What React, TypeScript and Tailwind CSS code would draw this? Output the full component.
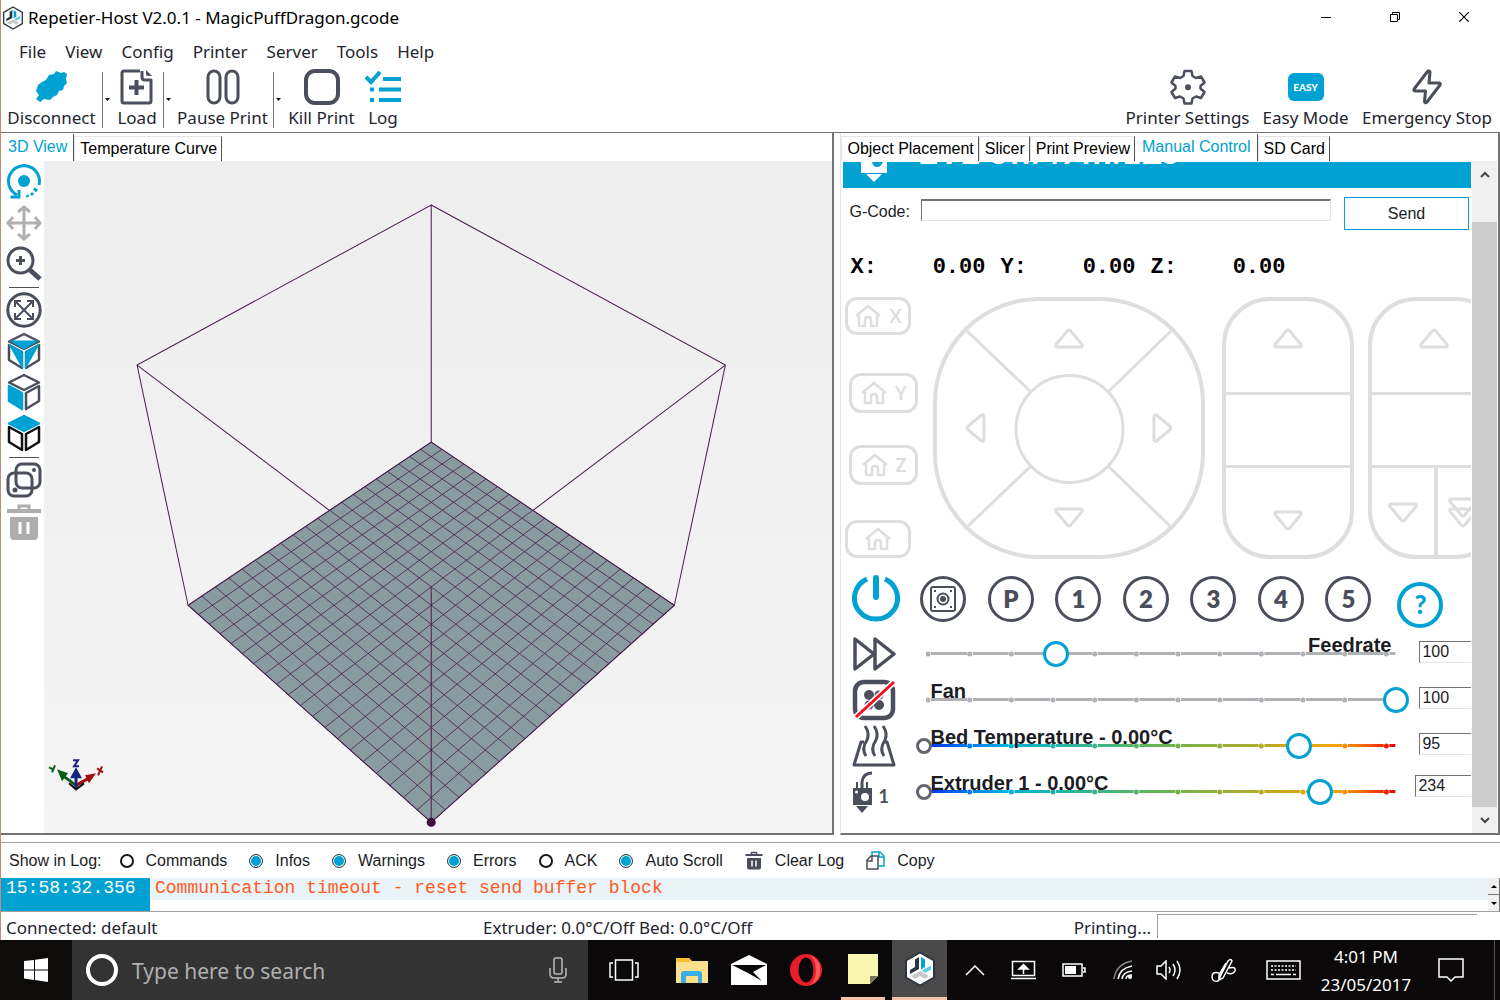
import { useState } from 'react';
import type { ReactNode } from 'react';

const DARK = '#4b4f5c';
const BLUE = '#00a2d3';
const PALE = '#dedede';

const Logo: React.FC<{ className: string }> = ({ className }) => (
  <svg viewBox="0 0 32 36" className={className}>
    <path d="M16 1.500 L30 9.500 V26.500 L16 34.500 L2 26.500 V9.500 Z" fill="#fff" stroke="#2c3440" strokeWidth="2" strokeLinejoin="round" />
    <path d="M15 6 V18 L6 23 V19 L11 16 V8.500 Z" fill="#2c3440" />
    <path d="M17 6 L21 8.500 V16 L17 18.500 Z" fill={BLUE} />
    <path d="M18 19.500 L27 14.500 V18.500 L21 22 Z" fill="#5fcbe6" />
    <path d="M16 20 L25 25 L21 28 L16 25 L11 28 L7 25 Z" fill="#c9c9c9" />
  </svg>
);

const Arrow: React.FC<{ className?: string }> = ({ className = '' }) => (
  <svg viewBox="0 0 32 22" className={`h-[22px] w-8 ${className}`}>
    <path d="M14.500 2.800 Q16 1.200 17.500 2.800 L29 16.500 Q30 19 27.500 19 H4.500 Q2 19 3 16.500 Z" fill="none" stroke={PALE} strokeWidth="3" strokeLinejoin="round" />
  </svg>
);

interface ToolButtonProps {
  label: string;
  width: string;
  children: ReactNode;
}

const ToolButton: React.FC<ToolButtonProps> = ({ label, width, children }) => (
  <button type="button" className={`flex shrink-0 flex-col items-center pb-[5px] ${width}`}>
    <span className="flex h-[42px] items-center justify-center">{children}</span>
    <span className="text-[17px] leading-5 whitespace-nowrap">{label}</span>
  </button>
);

const Dropdown: React.FC<{ label: string }> = ({ label }) => (
  <button type="button" aria-label={label} className="flex h-[56px] w-[9px] shrink-0 items-center justify-center border-l border-neutral-500">
    <svg viewBox="0 0 5 3" className="h-[3px] w-[5px]"><path d="M0 0 H5 L2.500 3 Z" fill="#111" /></svg>
  </button>
);

const DisconnectIcon = () => (
  <svg viewBox="0 0 32 32" className="size-8">
    <path d="M28 1 L31 3 L30 8 L31 12 L28 15 L27 19 L23 20 L21 24 L17 26 L14 29 L8 28 L4 31 L0 28 L3 24 L0 20 L2 14 L6 11 L10 9 L13 4 L18 3 L20 0 L25 2 Z" fill={BLUE} />
  </svg>
);

const LoadIcon = () => (
  <svg viewBox="0 0 34 36" className="h-9 w-[34px]" fill="none" stroke={DARK} strokeWidth="3">
    <path d="M20 2 H4 Q2 2 2 4 V32 Q2 34 4 34 H29 Q31 34 31 32 V11 H25 Q22 11 22 8 V2" strokeLinejoin="round" />
    <path d="M26 1 V5 Q26 7 28 7 H32 Z" fill={DARK} stroke="none" />
    <path d="M16.500 11 V26 M9 18.500 H24" strokeWidth="4" />
  </svg>
);

const PauseIcon = () => (
  <svg viewBox="0 0 34 36" className="h-9 w-[34px]" fill="none" stroke={DARK} strokeWidth="3">
    <rect x="2" y="2" width="12" height="32" rx="6" />
    <rect x="20" y="2" width="12" height="32" rx="6" />
  </svg>
);

const KillIcon = () => (
  <svg viewBox="0 0 36 36" className="size-9">
    <rect x="2" y="2" width="32" height="32" rx="9" fill="none" stroke={DARK} strokeWidth="4" />
  </svg>
);

const LogIcon = () => (
  <svg viewBox="0 0 36 32" className="h-8 w-9" fill="none" stroke={BLUE} strokeWidth="4">
    <path d="M1 6 L6 11 L15 1" />
    <path d="M18 8 H36 M14 18.500 H36 M14 29 H36 M5 18.500 H9 M5 29 H9" />
  </svg>
);

const GearIcon = () => (
  <svg viewBox="0 0 36 36" className="size-9">
    <path d="M14.500 2 H21.500 L22.500 7 L26 9 L31 7.500 L34.500 13.500 L30.500 17 V19.500 L34.500 23 L31 29 L26 27.500 L22.500 29.500 L21.500 34.500 H14.500 L13.500 29.500 L10 27.500 L5 29 L1.500 23 L5.500 19.500 V17 L1.500 13.500 L5 7.500 L10 9 L13.500 7 Z" fill="none" stroke={DARK} strokeWidth="2.500" strokeLinejoin="round" />
    <circle cx="18" cy="18.200" r="3" fill={DARK} />
  </svg>
);

const BoltIcon = () => (
  <svg viewBox="0 0 30 36" className="h-9 w-[30px]">
    <path d="M15.500 2.500 Q17 1 18 3 L17 14 H27 Q29 14.500 28 16 L15 33 Q13 35 12.500 32.500 L13.500 22 H3 Q1 21.500 2.500 19.500 Z" fill="none" stroke={DARK} strokeWidth="3" strokeLinejoin="round" />
  </svg>
);

/* ---------- View toolbar icons ---------- */

const Cube: React.FC<{ face: 'iso' | 'front' | 'top' }> = ({ face }) => {
  const line = face === 'top' ? '#111' : DARK;
  return (
    <svg viewBox="0 0 36 38" className="h-[38px] w-9" fill="none" stroke={line} strokeWidth="2.500" strokeLinejoin="round">
      <path d="M18 2 L33 9.500 L18 17 L3 9.500 Z" fill={face === 'top' ? BLUE : 'none'} stroke={face === 'top' ? BLUE : line} />
      <path d="M3 13 L16 20 V36 L3 28 Z" fill={face === 'front' ? BLUE : 'none'} stroke={face === 'front' ? BLUE : line} />
      <path d="M33 13 L20 20 V36 L33 28 Z" />
      {face === 'iso' && (
        <>
          <path d="M3 8.500 H33 L18 17.500 Z" fill={BLUE} stroke="none" />
          <path d="M2 11.500 L17 19.500 V38 Z" fill={BLUE} stroke="none" />
          <path d="M34 11.500 L19 19.500 V38 Z" fill={BLUE} stroke="none" />
        </>
      )}
    </svg>
  );
};

const RotateIcon = () => (
  <svg viewBox="0 0 36 36" className="size-9" fill="none" stroke={BLUE}>
    <path d="M11 31 A15.500 15.500 0 1 1 33 21" strokeWidth="3" />
    <path d="M4.500 33 H13 V26" strokeWidth="3" />
    <circle cx="18" cy="17" r="6" fill={BLUE} stroke="none" />
    <path d="M28 24.500 L31 27 M25 29 L27 31 M21 31 L22 33" strokeWidth="3" />
  </svg>
);

const MoveIcon = () => (
  <svg viewBox="0 0 36 36" className="size-9" fill="none" stroke="#b0b0b0" strokeWidth="3">
    <path d="M18 2 V34 M2 18 H34 M12 7 L18 2 L24 7 M12 29 L18 34 L24 29 M7 12 L2 18 L7 24 M29 12 L34 18 L29 24" />
  </svg>
);

const ZoomIcon = () => (
  <svg viewBox="0 0 36 36" className="size-9" fill="none" stroke={DARK} strokeWidth="3">
    <circle cx="14.500" cy="14.500" r="12.500" />
    <path d="M14.500 10 V19 M10 14.500 H19" />
    <path d="M24 24 L34 33" strokeWidth="5" />
  </svg>
);

const FitIcon = () => (
  <svg viewBox="0 0 36 36" className="size-9" fill="none" stroke={DARK} strokeWidth="2">
    <circle cx="18" cy="18" r="16.200" strokeWidth="3" />
    <path d="M9 9 L27 27 M27 9 L9 27" />
    <path d="M9 15 V9 H15 M21 9 H27 V15 M27 21 V27 H21 M15 27 H9 V21" />
  </svg>
);

const CloneIcon = () => (
  <svg viewBox="0 0 36 36" className="size-9" fill="none" stroke={DARK} strokeWidth="3">
    <rect x="10" y="2" width="24" height="24" rx="6" />
    <rect x="2" y="11" width="24" height="23" rx="6" />
    <circle cx="28" cy="8" r="2" fill={DARK} stroke="none" />
    <circle cx="9" cy="28" r="2.500" fill={DARK} stroke="none" />
  </svg>
);

const TrashIcon: React.FC<{ color: string; className: string }> = ({ color, className }) => (
  <svg viewBox="0 0 36 38" className={className}>
    <path d="M13 7 V3 H23 V7" fill="none" stroke={color} strokeWidth="3" />
    <path d="M1 6 H35 V10 H1 Z M4 14 H32 V33 Q32 37 28 37 H8 Q4 37 4 33 Z" fill={color} />
    <path d="M14 19 V31 M22 19 V31" stroke="#fff" strokeWidth="3" />
  </svg>
);

const Divider = () => <hr className="w-[30px] border-t border-neutral-600" />;

const ViewTools = () => (
  <div className="flex w-[43px] shrink-0 flex-col items-center gap-[5px] bg-white pt-[3px] pl-0.5">
    <button type="button" aria-label="Rotate"><RotateIcon /></button>
    <button type="button" aria-label="Move"><MoveIcon /></button>
    <button type="button" aria-label="Zoom"><ZoomIcon /></button>
    <Divider />
    <button type="button" aria-label="Fit objects" className="-mt-px"><FitIcon /></button>
    <button type="button" aria-label="Isometric view" className="-mt-px"><Cube face="iso" /></button>
    <button type="button" aria-label="Front view" className="-mt-0.5"><Cube face="front" /></button>
    <button type="button" aria-label="Top view" className="-mt-0.5"><Cube face="top" /></button>
    <Divider />
    <button type="button" aria-label="Toggle edges" className="-mt-px"><CloneIcon /></button>
    <button type="button" aria-label="Delete"><TrashIcon color="#adadad" className="h-[38px] w-9" /></button>
  </div>
);

/* ---------- 3D scene ---------- */

// print bed corners: back, right, front, left
const bed = [[431, 442], [674, 605], [431, 822], [188, 605]];

// maps unit bed coordinates to the projected bed
const project = (u: number, v: number): [number, number] => {
  const [[x0, y0], [x1, y1], [x2, y2], [x3, y3]] = bed;
  const dx1 = x1 - x2, dx2 = x3 - x2, sx = x0 - x1 + x2 - x3;
  const dy1 = y1 - y2, dy2 = y3 - y2, sy = y0 - y1 + y2 - y3;
  const det = dx1 * dy2 - dx2 * dy1;
  const g = (sx * dy2 - dx2 * sy) / det;
  const h = (dx1 * sy - dy1 * sx) / det;
  const w = g * u + h * v + 1;
  return [
    ((x1 - x0 + g * x1) * u + (x3 - x0 + h * x3) * v + x0) / w,
    ((y1 - y0 + g * y1) * u + (y3 - y0 + h * y3) * v + y0) / w,
  ];
};

const CELLS = 20;
const gridPath = Array.from({ length: CELLS + 1 }, (_, i) => {
  const t = i / CELLS;
  return `M${project(t, 0)} L${project(t, 1)} M${project(0, t)} L${project(1, t)}`;
}).join(' ');

const Scene = () => (
  <div className="min-w-0 flex-1 bg-gradient-to-b from-[#eeeeee] to-[#f4f4f4]">
    <svg viewBox="44 161 788 672" className="block h-full w-full" role="img" aria-label="Print bed">
      <g fill="none" stroke="#4a1a4f" strokeWidth="1">
        <path d="M431 442 V205 L137 365 L188 605 M431 205 L725 365 L674 605 M137 365 L431 587 L725 365" />
        <path d="M431 442 L674 605 L431 822 L188 605 Z" fill="#889b9f" />
        <path d={gridPath} strokeWidth="0.800" />
        <path d="M431 587 V822" />
      </g>
      <circle cx="431" cy="822" r="4.500" fill="#3c0f40" />
      <g strokeWidth="3" fill="none">
        <path d="M76 785 L61 774" stroke="#075c18" />
        <path d="M76 785 L92 776" stroke="#a01010" />
        <path d="M76 788 V771" stroke="#15257d" />
      </g>
      <path d="M57 769 L68 773 L62 781 Z" fill="#075c18" />
      <path d="M96 773 L85 775 L89 783 Z" fill="#a01010" />
      <path d="M76 767 L70 778 H82 Z" fill="#15257d" />
      <path d="M69 783 L76 789 L84 783" stroke="#111" strokeWidth="2" fill="none" />
      <path d="M49 767 L53 769 M55 765 L52 772" stroke="#075c18" strokeWidth="2" />
      <path d="M97 768 L103 772 M102 766 L98 775" stroke="#a01010" strokeWidth="2" />
      <path d="M73 760 H78 L74 766 H79" stroke="#15257d" strokeWidth="2" fill="none" />
    </svg>
  </div>
);

/* ---------- Tabs ---------- */

interface TabsProps {
  tabs: string[];
  active: string;
}

const Tabs: React.FC<TabsProps> = ({ tabs, active }) => (
  <div role="tablist" className="flex h-[27px] shrink-0 items-stretch bg-white font-['Liberation_Sans',Arial,sans-serif] text-base">
    {tabs.map(tab => (
      <button
        key={tab}
        type="button"
        role="tab"
        aria-selected={tab === active}
        className={
          tab === active
            ? 'border-r border-neutral-600 pr-[6px] pb-[1px] pl-[7px] text-[#00a2d3]'
            : 'mt-[2px] border-t border-r border-l border-t-neutral-200 border-r-neutral-600 border-l-neutral-200 pr-1 pb-[1px] pl-[5px] text-black'
        }
      >
        {tab}
      </button>
    ))}
  </div>
);

/* ---------- Manual control ---------- */

const HomeIcon = () => (
  <svg viewBox="0 0 26 24" className="h-6 w-[26px]" fill="none" stroke={PALE} strokeWidth="2.500" strokeLinejoin="round">
    <path d="M1 12 L13 2 L25 12 M4 11 V22 H10 V16 Q10 13 13 13 Q16 13 16 16 V22 H22 V11" />
  </svg>
);

const homeButtons = [
  { axis: 'X', box: 'h-[38px] w-[66px]' },
  { axis: 'Y', box: 'mt-[38px] ml-1 h-10 w-[69px]' },
  { axis: 'Z', box: 'mt-8 ml-1 h-10 w-[69px]' },
  { axis: '', box: 'mt-[35px] h-[38px] w-[66px]' },
];

const JogPad = () => (
  <div className="relative h-[262px] w-[272px] shrink-0 overflow-hidden rounded-[106px] border-4 border-[#dedede]">
    <svg viewBox="4 4 264 254" className="absolute inset-0 size-full" fill="none" stroke={PALE} strokeWidth="3">
      <circle cx="136.500" cy="132" r="53.500" />
      <path d="M34 34 L98 95 M238 34 L175 95 M34 230 L98 169 M238 230 L175 169" />
    </svg>
    <div className="relative grid h-full grid-cols-[78px_108px_78px] grid-rows-[76px_102px_76px] place-items-center">
      <button type="button" aria-label="Y plus" className="col-start-2"><Arrow /></button>
      <button type="button" aria-label="X minus" className="col-start-1 row-start-2"><Arrow className="-rotate-90" /></button>
      <button type="button" aria-label="X plus" className="col-start-3 row-start-2"><Arrow className="rotate-90" /></button>
      <button type="button" aria-label="Y minus" className="col-start-2 row-start-3"><Arrow className="rotate-180" /></button>
    </div>
  </div>
);

const ZPad = () => (
  <div className="flex h-[262px] w-[132px] shrink-0 flex-col rounded-[48px] border-4 border-[#dedede]">
    <button type="button" aria-label="Z plus" className="flex h-[91px] items-center justify-center pb-4"><Arrow /></button>
    <div className="h-[76px] border-y-[3px] border-[#dedede]" />
    <button type="button" aria-label="Z minus" className="flex flex-1 items-center justify-center pt-4"><Arrow className="rotate-180" /></button>
  </div>
);

const ExtruderPad = () => (
  <div className="flex h-[262px] w-[136px] shrink-0 flex-col rounded-[48px] border-4 border-[#dedede]">
    <button type="button" aria-label="Retract" className="flex h-[91px] items-center justify-center pr-1 pb-4"><Arrow /></button>
    <div className="h-[76px] border-y-[3px] border-[#dedede]" />
    <div className="flex flex-1">
      <button type="button" aria-label="Extrude" className="flex w-[66px] items-center justify-center border-r-4 border-[#dedede]"><Arrow className="rotate-180" /></button>
      <button type="button" aria-label="Extrude fast" className="flex flex-1 flex-col items-center justify-center pr-3">
        <Arrow className="rotate-180" />
        <Arrow className="-mt-3 rotate-180" />
      </button>
    </div>
  </div>
);

const PowerIcon = () => (
  <svg viewBox="0 0 48 48" className="size-12" fill="none" stroke={BLUE}>
    <path d="M15 4 A21.500 21 0 1 0 33 4" strokeWidth="5" />
    <path d="M24 3 V22" strokeWidth="6" strokeLinecap="round" />
  </svg>
);

const MotorIcon = () => (
  <svg viewBox="0 0 28 28" className="size-7" fill="none" stroke={DARK} strokeWidth="2">
    <rect x="2" y="2" width="24" height="24" rx="2" />
    <circle cx="14" cy="14" r="5.500" />
    <circle cx="14" cy="14" r="2" fill={DARK} />
    <path d="M5 6 H7 M21 6 H23 M5 22 H7 M21 22 H23" />
  </svg>
);

const roundButton = "flex size-[46px] shrink-0 items-center justify-center rounded-full border-[3px] border-[#4b4f5c] font-['Lato',sans-serif] text-2xl font-extrabold text-[#4b4f5c]";

const FeedIcon = () => (
  <svg viewBox="0 0 44 34" className="h-[34px] w-11" fill="none" stroke={DARK} strokeWidth="3.500" strokeLinejoin="round">
    <path d="M3 2 V32 L22 17 Z M23 2 V32 L42 17 Z" />
  </svg>
);

const FanIcon = () => (
  <svg viewBox="0 0 44 42" className="h-[42px] w-11">
    <rect x="3" y="3" width="38" height="36" rx="9" fill="none" stroke={DARK} strokeWidth="4.500" />
    <g fill={DARK}>
      <circle cx="17" cy="16" r="5" />
      <circle cx="27" cy="16" r="4.500" />
      <circle cx="17" cy="26" r="4.500" />
      <circle cx="27" cy="26" r="5" />
    </g>
    <path d="M4 38 L42 3" stroke="#fff" strokeWidth="6" />
    <path d="M4 38 L42 3" stroke="#f01020" strokeWidth="3" />
  </svg>
);

const BedIcon = () => (
  <svg viewBox="0 0 44 42" className="h-[42px] w-11" fill="none" stroke={DARK}>
    <path d="M12 17 H9 L2 40 H42 L35 17 H33" strokeWidth="3" strokeLinejoin="round" />
    <path d="M13 1 Q18 8 15 15 Q9 24 14 31 M22 1 Q27 8 24 15 Q18 24 23 31 M31 1 Q36 8 33 15 Q27 24 32 31" strokeWidth="3" />
  </svg>
);

const ExtruderIcon = () => (
  <svg viewBox="0 0 22 42" className="h-[42px] w-[22px]">
    <path d="M10 17 V11 Q11 2 20 2" fill="none" stroke={DARK} strokeWidth="3" />
    <path d="M5 11 V17 M15 11 V17" stroke={DARK} strokeWidth="2" />
    <path d="M1 17 H20 V34 H1 Z M4 35 H16 L10 42 Z" fill={DARK} />
    <circle cx="13" cy="26" r="4" fill="#fff" />
    <circle cx="4.500" cy="21" r="1.500" fill="#fff" />
  </svg>
);

const TICK = 125 / 3;

const Track: React.FC<{ heat: boolean }> = ({ heat }) => {
  const paint = heat ? 'url(#heat)' : '#b0b1b5';
  return (
    <svg viewBox="0 0 470 6" className="absolute top-5 left-[11px] h-[6px] w-[470px]">
      <defs>
        <linearGradient id="heat" gradientUnits="userSpaceOnUse" x1="0" y1="0" x2="470" y2="0">
          <stop offset="0" stopColor="#0030e0" />
          <stop offset="0.090" stopColor="#0078f0" />
          <stop offset="0.170" stopColor="#00b4dc" />
          <stop offset="0.350" stopColor="#35b58c" />
          <stop offset="0.480" stopColor="#62b558" />
          <stop offset="0.700" stopColor="#b0ac2c" />
          <stop offset="0.870" stopColor="#f5a600" />
          <stop offset="0.930" stopColor="#f56a10" />
          <stop offset="1" stopColor="#f00000" />
        </linearGradient>
      </defs>
      {Array.from({ length: 12 }, (_, i) => (
        <g key={i} fill={paint}>
          <circle cx={2 + i * TICK} cy="3" r="2.500" />
          <rect x={5 + i * TICK} y="1" width={i === 11 ? 6 : 36} height="3" />
        </g>
      ))}
    </svg>
  );
};

interface Control {
  id: string;
  label: string;
  value: number;
  min: number;
  max: number;
  heat: boolean;
  icon: ReactNode;
}

const controls: Control[] = [
  { id: 'feedrate', label: 'Feedrate', value: 100, min: 25, max: 300, heat: false, icon: <FeedIcon /> },
  { id: 'fan', label: 'Fan', value: 100, min: 0, max: 100, heat: false, icon: <FanIcon /> },
  { id: 'bed', label: 'Bed Temperature - 0.00°C', value: 95, min: 0, max: 120, heat: true, icon: <BedIcon /> },
  {
    id: 'extruder',
    label: 'Extruder 1 - 0.00°C',
    value: 234,
    min: 0,
    max: 280,
    heat: true,
    icon: (
      <span className="flex items-center gap-1 font-['Lato',sans-serif] text-lg font-bold text-[#4b4f5c]">
        <ExtruderIcon />
        <span className="pt-2">1</span>
      </span>
    ),
  },
];

const ControlRow: React.FC<{ control: Control }> = ({ control }) => {
  const [value, setValue] = useState(control.value);
  return (
    <div className="flex h-[46px] items-center">
      <div className="flex w-[72px] shrink-0 items-center pl-[9px]">{control.icon}</div>
      <div className="relative h-[46px] w-[494px] shrink-0">
        <Track heat={control.heat} />
        {control.heat && <span className="absolute top-[15px] left-[1px] size-4 rounded-full border-[3px] border-[#63666f] bg-white" />}
        <input
          id={control.id}
          type="range"
          min={control.min}
          max={control.max}
          value={value}
          onChange={e => setValue(Number(e.target.value))}
          className="absolute inset-0 h-full w-full appearance-none bg-transparent [&::-webkit-slider-thumb]:size-[26px] [&::-webkit-slider-thumb]:appearance-none [&::-webkit-slider-thumb]:rounded-full [&::-webkit-slider-thumb]:border-[3px] [&::-webkit-slider-thumb]:border-[#00a2d3] [&::-webkit-slider-thumb]:bg-white"
        />
        <label
          htmlFor={control.id}
          className={`absolute top-[2px] text-xl leading-6 font-bold whitespace-nowrap text-[#1b1c24] ${control.id === 'feedrate' ? 'right-[18px]' : 'left-[15px]'}`}
        >
          {control.label}
        </label>
      </div>
      <input
        type="text"
        aria-label={`${control.label} value`}
        value={value}
        onChange={e => setValue(Number(e.target.value) || 0)}
        className={`h-[22px] w-20 shrink-0 border border-neutral-200 border-t-neutral-500 border-l-neutral-500 px-[2px] text-base ${control.id === 'extruder' ? 'mb-3 ml-[6px]' : 'mb-[5px] ml-[10px]'}`}
      />
    </div>
  );
};

const ManualControl = () => (
  <div className="min-w-0 flex-1 overflow-hidden pt-px pl-[2px] font-['Liberation_Sans',Arial,sans-serif] text-base text-[#1b1c24]">
    <div className="relative flex h-[26px] items-start overflow-hidden bg-[#00a2d3] text-white">
      <svg viewBox="0 0 26 21" className="ml-[18px] h-[21px] w-[26px]">
        <path d="M0 0 H26 V11 H0 Z M5 12 H21 L13 20 Z" fill="#fff" />
        <path d="M11 0 H22 Q20 5 16 5 Q12 5 11 0 Z" fill={BLUE} />
      </svg>
      <span className="absolute -top-[30px] left-[74px] font-['Lato',sans-serif] text-[36px] leading-9 font-bold whitespace-nowrap">ETE 5h:47m:12s</span>
    </div>
    <form className="mt-[9px] flex h-[33px] items-start pr-0.5" onSubmit={e => e.preventDefault()}>
      <label htmlFor="gcode" className="w-[78px] shrink-0 pt-[3px] pl-[6px]">G-Code:</label>
      <input id="gcode" type="text" className="mt-0.5 h-[22px] min-w-0 flex-1 border border-t-2 border-neutral-200 border-t-neutral-500 border-l-neutral-500" />
      <button type="submit" className="ml-[13px] h-[33px] w-[125px] shrink-0 border border-[#00a2d3]">Send</button>
    </form>
    <div className="flex h-[67px] items-center pt-2 pl-[7px] font-['Liberation_Mono',monospace] text-[22px] font-bold text-black">
      {['X', 'Y', 'Z'].map(axis => (
        <div key={axis} className="flex w-[150px] justify-between pr-[15px]">
          <span>{axis}:</span>
          <span>0.00</span>
        </div>
      ))}
    </div>
    <div className="flex pl-0.5">
      <div className="w-[88px] shrink-0">
        {homeButtons.map(({ axis, box }) => (
          <button
            key={axis}
            type="button"
            aria-label={`Home ${axis || 'all'}`}
            className={`flex items-center justify-center gap-2 rounded-xl border-[3px] border-[#dedede] font-['Lato',sans-serif] text-lg font-bold text-[#dedede] ${box}`}
          >
            <HomeIcon />
            {axis}
          </button>
        ))}
      </div>
      <JogPad />
      <div className="ml-[17px] flex gap-[14px]">
        <ZPad />
        <ExtruderPad />
      </div>
    </div>
    <div className="mt-4 flex h-12 items-center pl-[9px]">
      <button type="button" aria-label="Power" className="mr-5"><PowerIcon /></button>
      <div className="flex w-[451px] shrink-0 justify-between">
        <button type="button" aria-label="Stop motor" className={roundButton}><MotorIcon /></button>
        {['P', '1', '2', '3', '4', '5'].map(name => (
          <button key={name} type="button" className={roundButton}>{name}</button>
        ))}
      </div>
      <button type="button" className="mt-[11px] ml-[26px] flex size-[46px] shrink-0 items-center justify-center rounded-full border-4 border-[#00a2d3] font-['Lato',sans-serif] text-[26px] font-black text-[#00a2d3]">?</button>
    </div>
    <div className="mt-2">
      {controls.map(control => <ControlRow key={control.id} control={control} />)}
    </div>
  </div>
);

const Chevron: React.FC<{ className?: string }> = ({ className = '' }) => (
  <svg viewBox="0 0 10 8" className={`h-2 w-[10px] ${className}`}>
    <path d="M1 6 L5 2 L9 6" fill="none" stroke="#444" strokeWidth="2" />
  </svg>
);

const ScrollBar = () => (
  <div className="mr-px ml-px flex w-[25px] shrink-0 flex-col bg-[#f0f0f0]">
    <button type="button" aria-label="Scroll up" className="flex h-7 items-center justify-center"><Chevron /></button>
    <div className="mt-[33px] flex-1 bg-[#cdcdcd]" />
    <button type="button" aria-label="Scroll down" className="flex h-[26px] items-center justify-center"><Chevron className="rotate-180" /></button>
  </div>
);

/* ---------- Log ---------- */

const filters = [
  { name: 'Commands', on: false },
  { name: 'Infos', on: true },
  { name: 'Warnings', on: true },
  { name: 'Errors', on: true },
  { name: 'ACK', on: false },
  { name: 'Auto Scroll', on: true },
];

const LogBar = () => (
  <div className="flex h-9 shrink-0 items-center border-t border-neutral-400 pl-2 font-['Liberation_Sans',Arial,sans-serif] text-base text-[#1b1c24]">
    <span className="mr-[18px]">Show in Log:</span>
    {filters.map(({ name, on }) => (
      <label key={name} className="mr-[22px] flex items-center gap-3">
        <input
          type="checkbox"
          defaultChecked={on}
          className="size-[14px] appearance-none rounded-full border-2 border-neutral-900 checked:border checked:border-neutral-700 checked:bg-[#00a2d3] checked:shadow-[inset_0_0_0_1px_white]"
        />
        {name}
      </label>
    ))}
    <button type="button" className="mr-[22px] flex items-center gap-3">
      <TrashIcon color={DARK} className="h-[19px] w-[18px]" />
      Clear Log
    </button>
    <button type="button" className="flex items-center gap-3">
      <svg viewBox="0 0 19 19" className="size-[19px]" fill="none" strokeWidth="1.500">
        <path d="M6 5 V1 H14 L18 5 V15 H13 M13 1 V6 H18" stroke={BLUE} />
        <path d="M1 9 L5 5 H12 V18 H1 Z M1 10 H6 V5" stroke={DARK} fill="#fff" />
      </svg>
      Copy
    </button>
  </div>
);

const LogView = () => (
  <div className="flex h-[34px] shrink-0 border-b border-neutral-400 font-['Liberation_Mono',monospace] text-lg leading-5">
    <div className="w-[149px] shrink-0 bg-[#00a2d3] pl-[5px] text-white">15:58:32.356</div>
    <div className="min-w-0 flex-1">
      <div className="ml-px h-[22px] bg-[#eaf4f8] pl-1 whitespace-nowrap text-[#ff5a1e]">Communication timeout - reset send buffer block</div>
    </div>
    <div className="flex w-3 shrink-0 flex-col divide-y divide-neutral-500 border-r border-neutral-500 bg-[#f0f0f0]">
      <button type="button" aria-label="Log up" className="flex flex-1 items-center justify-center"><svg viewBox="0 0 6 3" className="h-[3px] w-[6px]"><path d="M0 3 H6 L3 0 Z" /></svg></button>
      <button type="button" aria-label="Log down" className="flex flex-1 items-center justify-center"><svg viewBox="0 0 6 3" className="h-[3px] w-[6px]"><path d="M0 0 H6 L3 3 Z" /></svg></button>
    </div>
  </div>
);

/* ---------- Windows taskbar ---------- */

const TrayIcons = () => (
  <>
    <button type="button" aria-label="Hidden icons" className="ml-[18px]">
      <svg viewBox="0 0 20 12" className="h-3 w-5"><path d="M1 11 L10 2 L19 11" stroke="#fff" strokeWidth="1.500" fill="none" /></svg>
    </button>
    <button type="button" aria-label="Safely remove" className="ml-[26px]">
      <svg viewBox="0 0 25 20" className="h-5 w-[25px]" fill="none" stroke="#fff" strokeWidth="1.500">
        <rect x="1.500" y="1.500" width="22" height="14" />
        <path d="M0 18.500 H25" />
        <path d="M12.500 14 V8 M8 9 L12.500 4.500 L17 9 Z" fill="#fff" />
      </svg>
    </button>
    <button type="button" aria-label="Battery" className="ml-[26px]">
      <svg viewBox="0 0 24 14" className="h-[14px] w-6"><path d="M1 1 H20 V13 H1 Z M21 5 H23 V9 H21" fill="none" stroke="#fff" strokeWidth="1.500" /><path d="M3 3 H14 V11 H3 Z" fill="#fff" /></svg>
    </button>
    <button type="button" aria-label="Network" className="ml-[27px]">
      <svg viewBox="0 0 20 20" className="size-5" fill="none" stroke="#fff" strokeWidth="1.500">
        <path d="M1 19 Q3 4 19 1" stroke="#888" />
        <path d="M5 19 Q7 8 19 6 M9 19 Q10 12 19 11 M13 19 Q13 15 19 15" />
        <circle cx="17" cy="17" r="2" fill="#fff" stroke="none" />
      </svg>
    </button>
    <button type="button" aria-label="Volume" className="ml-[23px]">
      <svg viewBox="0 0 26 20" className="h-5 w-[26px]" fill="none" stroke="#fff" strokeWidth="1.500"><path d="M1 6 H5 L10 1 V19 L5 14 H1 Z M13 7 Q15 10 13 13 M17 4 Q21 10 17 16 M21 1 Q27 10 21 19" /></svg>
    </button>
    <button type="button" aria-label="Pen workspace" className="ml-[29px]">
      <svg viewBox="0 0 25 25" className="size-[25px]" fill="none" stroke="#fff" strokeWidth="1.500"><path d="M8 15 Q1 13 1 19 Q1 24 7 23 L17 3 Q20 0 21 3 L12 20 L8 22 V17 L15 5 M18 10 Q25 8 24 13 Q22 17 16 15" /></svg>
    </button>
    <button type="button" aria-label="Keyboard" className="ml-[30px]">
      <svg viewBox="0 0 35 20" className="h-5 w-[35px]" fill="none" stroke="#fff" strokeWidth="1.500">
        <rect x="1" y="1" width="33" height="18" />
        <path d="M5 6 H30 M5 10 H30" strokeDasharray="2 1.500" />
        <path d="M5 14.500 H8 M10 14.500 H25 M27 14.500 H30" />
      </svg>
    </button>
  </>
);

const Taskbar = () => (
  <footer className="flex h-[60px] shrink-0 items-center overflow-hidden bg-[#0a0808] text-white">
    <button type="button" aria-label="Start" className="flex h-full w-[72px] shrink-0 items-center justify-center bg-[#0d0c0b]">
      <svg viewBox="0 0 24 24" className="size-6"><path d="M0 3 L10 2 V11.500 H0 Z M11 1.800 L24 0 V11.500 H11 Z M0 12.500 H10 V22 L0 20.500 Z M11 12.500 H24 V24 L11 22 Z" fill="#fff" /></svg>
    </button>
    <div className="flex h-full w-[516px] shrink-0 items-center bg-[#333] pr-[21px] pl-[14px]">
      <span className="mr-[14px] size-8 shrink-0 rounded-full border-[4px] border-white" />
      <input type="text" aria-label="Search" placeholder="Type here to search" className="min-w-0 flex-1 bg-transparent pt-[3px] text-[21px] placeholder:text-[#b0b0b0]" />
      <svg viewBox="0 0 18 26" className="h-[26px] w-[18px]" fill="none" stroke="#bbb" strokeWidth="1.500"><rect x="5" y="1" width="8" height="16" rx="2" /><path d="M1 11 V17 Q1 21 5 21 H13 Q17 21 17 17 V11 M9 21 V25 M5 25 H13" /></svg>
    </div>
    <button type="button" aria-label="Task view" className="ml-[21px]">
      <svg viewBox="0 0 30 22" className="h-[22px] w-[30px]" fill="none" stroke="#fff" strokeWidth="1.500"><path d="M6.500 1 H23.500 V21 H6.500 Z M4 4 H1 V18 H4 M26 4 H29 V18 H26" /></svg>
    </button>
    <button type="button" aria-label="File Explorer" className="ml-[37px]">
      <svg viewBox="0 0 32 27" className="h-[27px] w-8"><path d="M0 1 H13 L16 4 H32 V26 H0 Z" fill="#fde08c" /><path d="M0 1 H13 L15 5 H0 Z" fill="#f8c030" /><path d="M5 26 V17 Q5 14 8 14 H23 Q26 14 26 17 V26 H22 V19 H10 V26 Z" fill="#35aeea" /></svg>
    </button>
    <button type="button" aria-label="Mail" className="ml-[23px]">
      <svg viewBox="0 0 36 30" className="h-[30px] w-9"><path d="M0 9 L18 0 L36 9 V30 H0 Z" fill="#fff" /><path d="M1 10 H35 L22 17 L31 26 L17 18 Z" fill="#0a0808" /></svg>
    </button>
    <button type="button" aria-label="Opera" className="ml-[23px]">
      <svg viewBox="0 0 32 32" className="size-8"><circle cx="16" cy="16" r="16" fill="#e81c2b" /><path d="M20 1 A16 16 0 0 1 20 31 Q26 27 26 16 Q26 5 20 1" fill="#ff5a58" /><ellipse cx="16" cy="16" rx="7.500" ry="12.500" fill="#0a0808" /></svg>
    </button>
    <button type="button" aria-label="Sticky Notes" className="ml-[19px] flex h-full w-11 items-center justify-center border-b-[3px] border-[#f3c0a8]">
      <svg viewBox="0 0 30 30" className="size-[30px]"><path d="M0 0 H30 V22 L22 30 H0 Z" fill="#faf5b0" /><path d="M22 30 V22 H30 Z" fill="#77745a" /></svg>
    </button>
    <button type="button" aria-label="Repetier-Host" className="ml-[7px] flex h-full w-[55px] items-center justify-center border-b-[3px] border-[#f3c0a8] bg-[#4a4a4a]">
      <Logo className="h-9 w-8" />
    </button>
    <TrayIcons />
    <div className="ml-auto w-[110px] shrink-0 pt-0.5 text-center text-[17px] leading-7">
      <div>4:01 PM</div>
      <div>23/05/2017</div>
    </div>
    <button type="button" aria-label="Action center" className="mr-[5px] ml-[17px] flex h-full items-center border-r border-neutral-600 pr-[30px]">
      <svg viewBox="0 0 26 24" className="h-6 w-[26px]"><path d="M1 1 H25 V19 H17 L13 23 L9 19 H1 Z" fill="none" stroke="#fff" strokeWidth="1.500" /></svg>
    </button>
  </footer>
);

const menu = ['File', 'View', 'Config', 'Printer', 'Server', 'Tools', 'Help'];

const App: React.FC = () => (
  <div className="flex min-h-screen flex-col overflow-hidden bg-white font-['Noto_Sans',sans-serif] text-[#23242e]">
    <main className="flex flex-1 flex-col border-l border-[#c58a78]">
      <header className="flex h-9 shrink-0 items-center pr-0.5 pl-px text-black">
        <Logo className="h-6 w-[22px]" />
        <h1 className="ml-1 text-[17px]">Repetier-Host V2.0.1 - MagicPuffDragon.gcode</h1>
        <div className="ml-auto flex pb-0.5">
          <button type="button" aria-label="Minimize" className="flex w-[69px] justify-center"><svg viewBox="0 0 10 10" className="size-[10px]"><path d="M0 5.500 H10" stroke="#000" /></svg></button>
          <button type="button" aria-label="Restore" className="flex w-[69px] justify-center"><svg viewBox="0 0 10 10" className="size-[10px]" fill="none" stroke="#000"><path d="M0.500 2.500 H7.500 V9.500 H0.500 Z M2.500 2.500 V0.500 H9.500 V7.500 H7.500" /></svg></button>
          <button type="button" aria-label="Close" className="flex w-[69px] justify-center"><svg viewBox="0 0 10 10" className="size-[10px]"><path d="M0 0 L10 10 M10 0 L0 10" stroke="#000" strokeWidth="1.200" /></svg></button>
        </div>
      </header>

      <nav className="flex h-[31px] shrink-0 items-center gap-[19px] pl-[18px] text-[17px]">
        {menu.map(item => <button key={item} type="button">{item}</button>)}
      </nav>

      <div className="flex h-[66px] shrink-0 items-center border-b border-neutral-500">
        <ToolButton label="Disconnect" width="w-[101px]"><DisconnectIcon /></ToolButton>
        <Dropdown label="Connection options" />
        <ToolButton label="Load" width="w-[52px]"><LoadIcon /></ToolButton>
        <Dropdown label="Recent files" />
        <ToolButton label="Pause Print" width="w-[101px]"><PauseIcon /></ToolButton>
        <Dropdown label="Print options" />
        <ToolButton label="Kill Print" width="w-[79px]"><KillIcon /></ToolButton>
        <ToolButton label="Log" width="w-11"><LogIcon /></ToolButton>
        <div className="ml-auto flex gap-1 pr-1">
          <ToolButton label="Printer Settings" width="w-[131px]"><GearIcon /></ToolButton>
          <ToolButton label="Easy Mode" width="w-[97px]">
            <span className="flex h-7 w-9 items-center justify-center rounded-md bg-[#00a2d3] font-['Lato',sans-serif] text-[10px] font-black text-white">EASY</span>
          </ToolButton>
          <ToolButton label="Emergency Stop" width="w-[138px]"><BoltIcon /></ToolButton>
        </div>
      </div>

      <div className="flex flex-1">
        <section className="flex min-w-0 flex-1 flex-col border-r-2 border-b-2 border-neutral-500 bg-white pt-px">
          <Tabs tabs={['3D View', 'Temperature Curve']} active="3D View" />
          <div className="flex flex-1">
            <ViewTools />
            <Scene />
          </div>
        </section>
        <section className="ml-[6px] flex w-[44%] shrink-0 flex-col border-r-2 border-b-2 border-l border-neutral-500 border-l-neutral-200 pt-px">
          <Tabs tabs={['Object Placement', 'Slicer', 'Print Preview', 'Manual Control', 'SD Card']} active="Manual Control" />
          <div className="flex flex-1">
            <ManualControl />
            <ScrollBar />
          </div>
        </section>
      </div>

      <div className="h-[7px] shrink-0" />
      <LogBar />
      <LogView />

      <div className="flex h-7 shrink-0 items-center text-[17px]">
        <span className="w-[482px] shrink-0 pt-[3px] pl-[5px]">Connected: default</span>
        <span className="pt-[3px]">Extruder: 0.0°C/Off Bed: 0.0°C/Off</span>
        <span className="ml-auto pt-[3px]">Printing...</span>
        <div role="progressbar" aria-label="Print progress" className="mr-[23px] ml-[6px] h-6 w-80 border-t border-l border-neutral-400" />
      </div>
    </main>
    <Taskbar />
  </div>
);

export default App;
